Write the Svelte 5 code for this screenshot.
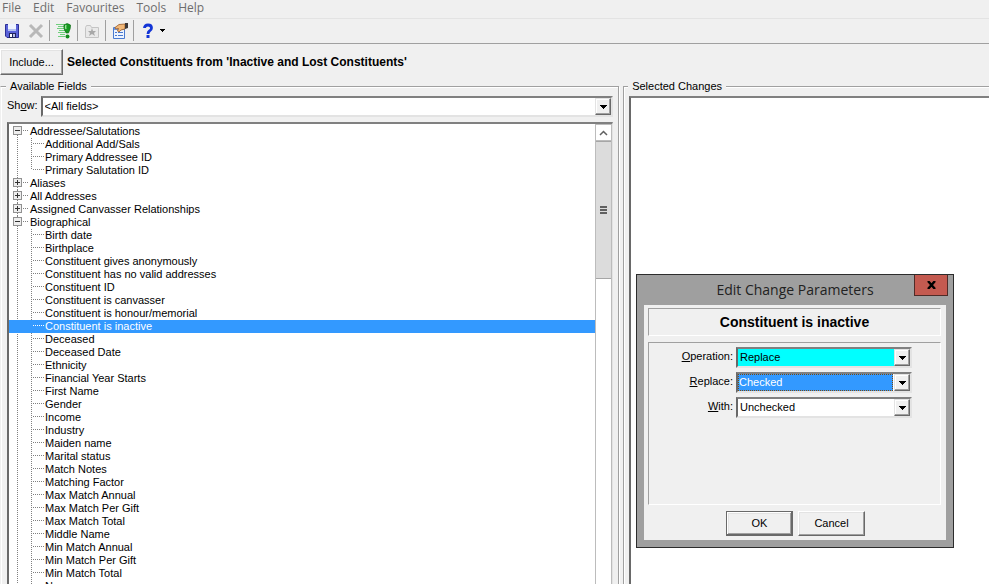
<script lang="ts">
	interface Group {
		name: string;
		open: boolean;
		fields: string[];
	}

	let groups: Group[] = $state([
		{
			name: 'Addressee/Salutations',
			open: true,
			fields: ['Additional Add/Sals', 'Primary Addressee ID', 'Primary Salutation ID']
		},
		{ name: 'Aliases', open: false, fields: [] },
		{ name: 'All Addresses', open: false, fields: [] },
		{ name: 'Assigned Canvasser Relationships', open: false, fields: [] },
		{
			name: 'Biographical',
			open: true,
			fields: [
				'Birth date',
				'Birthplace',
				'Constituent gives anonymously',
				'Constituent has no valid addresses',
				'Constituent ID',
				'Constituent is canvasser',
				'Constituent is honour/memorial',
				'Constituent is inactive',
				'Deceased',
				'Deceased Date',
				'Ethnicity',
				'Financial Year Starts',
				'First Name',
				'Gender',
				'Income',
				'Industry',
				'Maiden name',
				'Marital status',
				'Match Notes',
				'Matching Factor',
				'Max Match Annual',
				'Max Match Per Gift',
				'Max Match Total',
				'Middle Name',
				'Min Match Annual',
				'Min Match Per Gift',
				'Min Match Total',
				'Name'
			]
		}
	]);

	const menus = ['File', 'Edit', 'Favourites', 'Tools', 'Help'];

	let selected = $state('Constituent is inactive');
	let show = $state('<All fields>');
	let operation = $state('Replace');
	let replaceValue = $state('Checked');
	let withValue = $state('Unchecked');
	let dialogOpen = $state(true);
</script>

{#snippet arrow()}
	<span class="arrow" aria-hidden="true">
		<svg width="7" height="4" shape-rendering="crispEdges"><path d="M0 0h7v1h-1v1h-1v1h-1v1h-1v-1h-1v-1h-1v-1h-1z" /></svg>
	</span>
{/snippet}

<div class="app">
	<nav class="menu">
		{#each menus as menu}
			<button>{menu}</button>
		{/each}
	</nav>

	<div class="toolbar">
		<button aria-label="Save">
			<svg width="16" height="16" viewBox="0 0 16 16">
				<path d="M1.5 1.5h13v13H3l-1.5-1.500z" fill="#5a62d8" stroke="#2b2f96" />
				<path d="M4 1h8v7H4z" fill="#eef3ff" />
				<path d="M4 6h8v2H4z" fill="#b4c2f2" />
				<path d="M5 10h7v5H5z" fill="#20245c" />
				<path d="M6 11h2v3H6z" fill="#fff" />
				<path d="M9 11h2v3H9z" fill="#b8bfe8" />
			</svg>
		</button>
		<button aria-label="Delete">
			<svg width="16" height="16" viewBox="0 0 16 16">
				<path d="M2 2l12 12M14 2L2 14" stroke="#b8b8b8" stroke-width="3" fill="none" />
			</svg>
		</button>
		<i></i>
		<button aria-label="Run">
			<svg width="16" height="16" viewBox="0 0 16 16">
				<path d="M0 1.500h9M2 3.500h6M1 5.500h7M3 7.500h6M2 9.500h7M4 11.500h5M2 13.500h7" stroke="#6fcf7c" />
				<path d="M8 2q3-3 6.500 0q.5 3-2 8h-2.500q-3-5-2-8z" fill="#159a20" stroke="#0a6412" stroke-width=".6" />
				<path d="M10 2q-1 2 0 4" stroke="#9be39b" stroke-width="1.500" fill="none" />
				<circle cx="11.500" cy="13.500" r="2" fill="#128a1c" />
			</svg>
		</button>
		<i></i>
		<button aria-label="Add to favourites">
			<svg width="16" height="16" viewBox="0 0 16 16">
				<path d="M1.500 4.500l1-2h4l1 2h7v10h-13z" fill="#e9e9e9" stroke="#c4c4c4" />
				<path d="M8 5l1 3h3l-2 2 1 3-3-2-3 2 1-3-2-2h3z" fill="#a8a8a8" />
			</svg>
		</button>
		<i></i>
		<button aria-label="Properties">
			<svg width="16" height="16" viewBox="0 0 16 16">
				<path d="M1.500 4.500h11v11h-11z" fill="#edf4ff" stroke="#4a7bd0" />
				<path d="M2 5h10v2H2z" fill="#6f9ce8" />
				<path d="M3 9.500h2M6 9.500h5M3 12.500h2M6 12.500h5" stroke="#4a79cf" />
				<path d="M3 4.500l4-3 6-.5v5l-4 1-2 2-1.500-1 1-2.500-3 .5z" fill="#f2b878" stroke="#9b5a26" stroke-width=".8" />
				<path d="M13 0h3v5l-3 1z" fill="#3c3838" />
			</svg>
		</button>
		<i></i>
		<button aria-label="Help" class="help">
			<svg width="10" height="16" viewBox="0 0 10 16">
				<path d="M1.500 5Q1.500 2 5 2T8.500 5Q8.500 7 6.500 8Q5 9 5 11" stroke="#1335d6" stroke-width="2.800" fill="none" />
				<path d="M3.500 12h3v3h-3z" fill="#1335d6" />
			</svg>
			<svg width="5" height="3" shape-rendering="crispEdges"><path d="M0 0h5v1h-1v1h-1v1h-1v-1h-1v-1h-1z" /></svg>
		</button>
	</div>

	<header>
		<button class="push">Include...</button>
		<h1>Selected Constituents from 'Inactive and Lost Constituents'</h1>
	</header>

	<main>
		<fieldset class="available">
			<legend>Available Fields</legend>
			<div class="show">
				<label for="show">Sh<u>o</u>w:</label>
				<div class="combo">
					<select id="show" bind:value={show}>
						<option>&lt;All fields&gt;</option>
					</select>
					{@render arrow()}
				</div>
			</div>
			<div class="tree-box">
				<ul class="tree">
					{#each groups as group}
						<li>
							<div class="row">
								<button class="toggle" aria-label={group.name} onclick={() => (group.open = !group.open)}>
									<svg width="9" height="9" shape-rendering="crispEdges">
										<path d="M0 0h9v9H0z" fill="#919191" />
										<path d="M1 1h7v7H1z" fill="#eee" />
										<path d={group.open ? 'M2 4h5v1H2z' : 'M2 4h5v1H2zM4 2h1v5H4z'} fill="#333" />
									</svg>
								</button>
								<span>{group.name}</span>
							</div>
							{#if group.open}
								<ul>
									{#each group.fields as field}
										<li>
											<button class="field" class:selected={field === selected} onclick={() => (selected = field)}>
												{field}
											</button>
										</li>
									{/each}
								</ul>
							{/if}
						</li>
					{/each}
				</ul>
				<div class="scrollbar">
					<button aria-label="Scroll up">
						<svg width="9" height="6" viewBox="0 0 9 6"><path d="M1 5l3.500-3.500L8 5" stroke="#606060" stroke-width="1.500" fill="none" /></svg>
					</button>
					<div class="thumb"><b></b><b></b><b></b></div>
				</div>
			</div>
		</fieldset>

		<fieldset class="changes">
			<legend>Selected Changes</legend>
			<div class="list"></div>
		</fieldset>
	</main>

	{#if dialogOpen}
		<div class="dialog" role="dialog" aria-labelledby="dialog-title">
			<div class="titlebar">
				<h2 id="dialog-title">Edit Change Parameters</h2>
				<button class="close" aria-label="Close" onclick={() => (dialogOpen = false)}>
					<svg width="9" height="8" viewBox="0 0 9 8"><path d="M1 0l7 8M8 0l-7 8" stroke="#000" stroke-width="2.400" /></svg>
				</button>
			</div>
			<div class="client">
				<h3>Constituent is inactive</h3>
				<div class="params">
					<label for="operation"><u>O</u>peration:</label>
					<div class="combo cyan">
						<select id="operation" bind:value={operation}>
							<option>Replace</option>
						</select>
						{@render arrow()}
					</div>
					<label for="replace"><u>R</u>eplace:</label>
					<div class="combo active">
						<select id="replace" bind:value={replaceValue}>
							<option>Checked</option>
							<option>Unchecked</option>
						</select>
						{@render arrow()}
					</div>
					<label for="with"><u>W</u>ith:</label>
					<div class="combo">
						<select id="with" bind:value={withValue}>
							<option>Checked</option>
							<option>Unchecked</option>
						</select>
						{@render arrow()}
					</div>
				</div>
				<div class="actions">
					<button class="push default" onclick={() => (dialogOpen = false)}>OK</button>
					<button class="push" onclick={() => (dialogOpen = false)}>Cancel</button>
				</div>
			</div>
		</div>
	{/if}
</div>

<style>
	:global(body) {
		background: #f0f0f0;
	}

	.app {
		position: relative;
		display: flex;
		flex-direction: column;
		height: 100vh;
		overflow: hidden;
		background: #f0f0f0;
		color: #000;
		font: 11px/13px "Liberation Sans", Arial, sans-serif;
	}

	.app * {
		box-sizing: border-box;
	}

	button,
	select {
		font: inherit;
		color: inherit;
		border: none;
		background: none;
		padding: 0;
		margin: 0;
	}

	h1,
	h2,
	h3 {
		margin: 0;
	}

	ul {
		list-style: none;
		margin: 0;
		padding: 0;
	}

	/* menu and toolbar */
	.menu {
		display: flex;
		gap: 12px;
		height: 18px;
		padding-left: 2px;
		font: 12px/16px "Open Sans", sans-serif;
		color: #6d6d6d;
	}

	.menu button {
		height: 16px;
	}

	.toolbar {
		display: flex;
		align-items: center;
		height: 26px;
		padding: 0 4px 1px;
		border-top: 1px solid #e3e3e3;
		border-bottom: 1px solid #a0a0a0;
	}

	.toolbar button {
		display: flex;
		align-items: center;
		margin-right: 8px;
	}

	.toolbar i {
		width: 1px;
		height: 21px;
		margin-right: 6px;
		margin-left: -3px;
		background: #a0a0a0;
	}

	.toolbar .help {
		gap: 7px;
		padding-left: 3px;
	}

	header {
		display: flex;
		align-items: center;
		gap: 4px;
		margin: 5px 0;
	}

	h1 {
		font-size: 12px;
		line-height: 16px;
	}

	.push {
		width: 67px;
		height: 25px;
		background: #f0f0f0;
		border: 1px solid;
		border-color: #fff #696969 #696969 #fff;
		box-shadow: inset -1px -1px 0 #a0a0a0, inset 1px 1px 0 #e3e3e3;
	}

	header .push {
		width: 63px;
		height: 26px;
	}

	.push.default {
		border-color: #696969;
		box-shadow: inset -1px -1px 0 #696969, inset 1px 1px 0 #fff, inset -2px -2px 0 #a0a0a0, inset 2px 2px 0 #e3e3e3;
	}

	/* group boxes */
	main {
		flex: 1;
		display: grid;
		grid-template-columns: minmax(0, 22fr) minmax(0, 13fr);
		gap: 4px;
		min-height: 0;
	}

	fieldset {
		display: flex;
		flex-direction: column;
		min-width: 0;
		margin: 0 0 -8px;
		border: 1px solid #a0a0a0;
		box-shadow: 1px 1px 0 #fff, inset 1px 1px 0 #fff;
		padding: 3px 5px 0;
	}

	legend {
		padding: 0 4px;
		margin-left: -1px;
		background: #f0f0f0;
	}

	.changes {
		margin-right: -8px;
	}

	.available {
		border-left-color: #f0f0f0;
		padding-left: 6px;
	}

	.show {
		display: flex;
		gap: 3px;
		margin-bottom: 5px;
	}

	.show label {
		padding-top: 3px;
	}

	.show .combo {
		flex: 1;
	}

	.combo,
	.tree-box,
	.list {
		background: #fff;
		border: 2px solid;
		border-color: #808080 #e3e3e3 #e3e3e3 #696969;
	}

	.combo {
		display: grid;
		height: 21px;
	}

	.combo select {
		grid-area: 1 / 1;
		appearance: none;
		width: 100%;
		padding: 0 18px 0 2px;
		border-radius: 0;
		outline: none;
	}

	.arrow {
		grid-area: 1 / 1;
		justify-self: end;
		display: grid;
		place-items: center;
		width: 16px;
		background: #f0f0f0;
		border: 1px solid;
		border-color: #e3e3e3 #696969 #696969 #e3e3e3;
		box-shadow: inset -1px -1px 0 #a0a0a0, inset 1px 1px 0 #fff;
		pointer-events: none;
	}

	.cyan {
		background: #0ff;
	}

	.combo.active select {
		width: calc(100% - 17px);
		padding: 0;
		border: 1px dotted #7a4a10;
		background: #39f;
		color: #fff;
	}

	.list {
		flex: 1;
	}

	/* field tree */
	.tree-box {
		flex: 1;
		display: flex;
		min-height: 0;
		border-right-width: 1px;
	}

	.tree {
		flex: 1;
		min-width: 0;
		padding-top: 1px;
		overflow: hidden;
	}

	.tree > li {
		background: repeating-linear-gradient(#808080 0 1px, transparent 1px 2px) 8px 0 / 1px 100% no-repeat;
	}

	.tree > li:first-child {
		background-position: 8px 6px;
	}

	.row {
		display: flex;
		align-items: flex-start;
		height: 13px;
		padding-left: 4px;
		background: repeating-linear-gradient(90deg, #808080 0 1px, transparent 1px 2px) 14px 5px / 5px 1px no-repeat;
	}

	.row span {
		padding-left: 8px;
	}

	.toggle {
		display: flex;
		padding-top: 1px;
	}

	.tree ul {
		background: repeating-linear-gradient(#808080 0 1px, transparent 1px 2px) 22px 0 / 1px calc(100% - 7px) no-repeat;
	}

	.field {
		display: block;
		width: 100%;
		height: 13px;
		padding-left: 36px;
		text-align: left;
		white-space: nowrap;
		background: repeating-linear-gradient(90deg, #808080 0 1px, transparent 1px 2px) 24px 5px / 11px 1px no-repeat;
	}

	.field.selected {
		background-color: #39f;
		background-image: repeating-linear-gradient(90deg, #fff 0 1px, transparent 1px 2px);
		color: #fff;
	}

	.scrollbar {
		width: 17px;
		background: #fff;
		border: solid #bcbcbc;
		border-width: 0 1px;
	}

	.scrollbar button {
		display: grid;
		place-items: center;
		width: 100%;
		height: 17px;
		border: solid #bcbcbc;
		border-width: 1px 0;
		background: #fff;
	}

	.thumb {
		display: flex;
		flex-direction: column;
		align-items: center;
		justify-content: center;
		gap: 1px;
		height: 138px;
		border: solid #a6a6a6;
		border-width: 1px 0;
		background: #dcdcdc;
	}

	.thumb b {
		width: 7px;
		height: 2px;
		background: #606060;
	}

	/* parameters window */
	.dialog {
		position: absolute;
		top: 274px;
		right: 35px;
		width: 318px;
		padding: 0 7px 7px;
		border: 1px solid #2c2c2c;
		background: #9f9f9f;
	}

	.titlebar {
		display: flex;
		justify-content: center;
		height: 30px;
	}

	h2 {
		padding-top: 5px;
		font: 14px/20px "Open Sans", sans-serif;
		color: #222;
	}

	.close {
		position: absolute;
		top: 0;
		right: 5px;
		display: grid;
		place-items: center;
		width: 34px;
		height: 21px;
		border: 1px solid #4f2b28;
		border-top: none;
		background: #c45a50;
	}

	.client {
		display: flex;
		flex-direction: column;
		gap: 6px;
		padding: 3px 5px 4px 4px;
		background: #f0f0f0;
	}

	h3,
	.params {
		border: 1px solid;
		border-color: #a0a0a0 #fff #fff #a0a0a0;
	}

	h3 {
		font-size: 14px;
		line-height: 26px;
		text-align: center;
	}

	.params {
		display: grid;
		grid-template-columns: 84px 176px;
		align-content: start;
		gap: 4px 3px;
		height: 163px;
		padding-top: 4px;
	}

	.params label {
		padding-top: 3px;
		text-align: right;
	}

	.actions {
		display: flex;
		justify-content: center;
		gap: 5px;
		padding-left: 2px;
	}
</style>
